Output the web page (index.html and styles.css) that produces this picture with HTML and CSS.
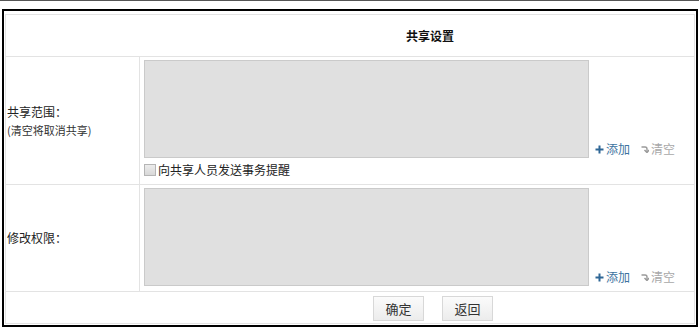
FILE: index.html
```html
<!DOCTYPE html>
<html lang="zh-CN">
<head>
<meta charset="utf-8">
<title>共享设置</title>
<link rel="stylesheet" href="styles.css">
</head>
<body>
<div class="frame">
  <div class="table">
    <div class="head"><span class="title">共享设置</span></div>
    <div class="row row-scope">
      <div class="label">
        <div>共享范围：</div>
        <div class="note">(清空将取消共享)</div>
      </div>
      <div class="cell">
        <div class="field">
          <div class="box"></div>
          <div class="links">
            <a class="add"><svg class="ico" width="9" height="9" viewBox="0 0 9 9"><path d="M4.5 0.5v8M0.5 4.5h8" stroke="#2f6796" stroke-width="2"/></svg>添加</a>
            <a class="clear"><svg class="ico" width="8" height="8" viewBox="0 0 8 8"><path d="M0.5 2h3.5a2 2 0 0 1 2 2v3" fill="none" stroke="#9a9a9a" stroke-width="1.4"/><path d="M3.5 5l2.5 2.6 2-2.6" fill="none" stroke="#9a9a9a" stroke-width="1.4"/></svg>清空</a>
          </div>
        </div>
        <label class="check"><span class="cb"></span>向共享人员发送事务提醒</label>
      </div>
    </div>
    <div class="row row-edit">
      <div class="label">
        <div>修改权限：</div>
      </div>
      <div class="cell">
        <div class="field">
          <div class="box"></div>
          <div class="links">
            <a class="add"><svg class="ico" width="9" height="9" viewBox="0 0 9 9"><path d="M4.5 0.5v8M0.5 4.5h8" stroke="#2f6796" stroke-width="2"/></svg>添加</a>
            <a class="clear"><svg class="ico" width="8" height="8" viewBox="0 0 8 8"><path d="M0.5 2h3.5a2 2 0 0 1 2 2v3" fill="none" stroke="#9a9a9a" stroke-width="1.4"/><path d="M3.5 5l2.5 2.6 2-2.6" fill="none" stroke="#9a9a9a" stroke-width="1.4"/></svg>清空</a>
          </div>
        </div>
      </div>
    </div>
    <div class="foot">
      <button class="btn">确定</button>
      <button class="btn">返回</button>
    </div>
  </div>
</div>
</body>
</html>
```

FILE: styles.css
```css
html, body {
  margin: 0;
  padding: 0;
  background: #fff;
}
body {
  border-top: 1px solid #555;
  font-family: "Noto Sans CJK SC", "Microsoft YaHei", sans-serif;
  font-size: 12px;
  color: #222;
}
.frame {
  margin: 8px 1px 0 2px;
  border: 2px solid #000;
  padding: 3px 1px 1px 1px;
}
.table {
  border: 1px solid #e3e3e3;
  display: flex;
  flex-direction: column;
}
.head {
  height: 41px;
  border-bottom: 1px solid #e3e3e3;
  display: flex;
  align-items: center;
  padding-left: 400px;
}
.title {
  font-weight: bold;
  color: #111;
  line-height: 16px;
}
.row {
  display: flex;
  border-bottom: 1px solid #e3e3e3;
}
.row-scope { height: 127px; }
.row-edit { height: 106px; }
.label {
  width: 132px;
  border-right: 1px solid #e3e3e3;
  display: flex;
  flex-direction: column;
  justify-content: center;
  padding-left: 1px;
  line-height: 18px;
  color: #222;
}
.note {
  font-size: 11px;
  color: #333;
}
.cell {
  flex: 1;
  padding: 3px 0 0 4px;
  display: flex;
  flex-direction: column;
}
.field {
  display: flex;
  align-items: flex-end;
}
.box {
  width: 443px;
  height: 96px;
  background: #e0e0e0;
  border: 1px solid #cacaca;
}
.links {
  display: flex;
  gap: 11px;
  margin-left: 6px;
  margin-bottom: 1px;
  line-height: 16px;
}
.links a {
  display: flex;
  align-items: center;
  text-decoration: none;
}
.add { color: #3d73a0; }
.clear { color: #a8a8a8; }
.ico { margin-right: 2px; }
.check {
  display: flex;
  align-items: center;
  margin-top: 4px;
  line-height: 16px;
  color: #222;
}
.cb {
  width: 10px;
  height: 10px;
  border: 1px solid #b5b5b5;
  background: linear-gradient(#ececec, #d8d8d8);
  margin-right: 2px;
}
.foot {
  height: 31px;
  display: flex;
  align-items: flex-start;
  gap: 18px;
  padding-left: 367px;
}
.btn {
  margin-top: 4px;
  width: 51px;
  height: 25px;
  border: 1px solid #d8d8d8;
  background: linear-gradient(#fbfbfb, #ececec);
  font-family: "Noto Sans CJK SC", sans-serif;
  font-size: 13px;
  color: #333;
  padding: 0;
}
```
